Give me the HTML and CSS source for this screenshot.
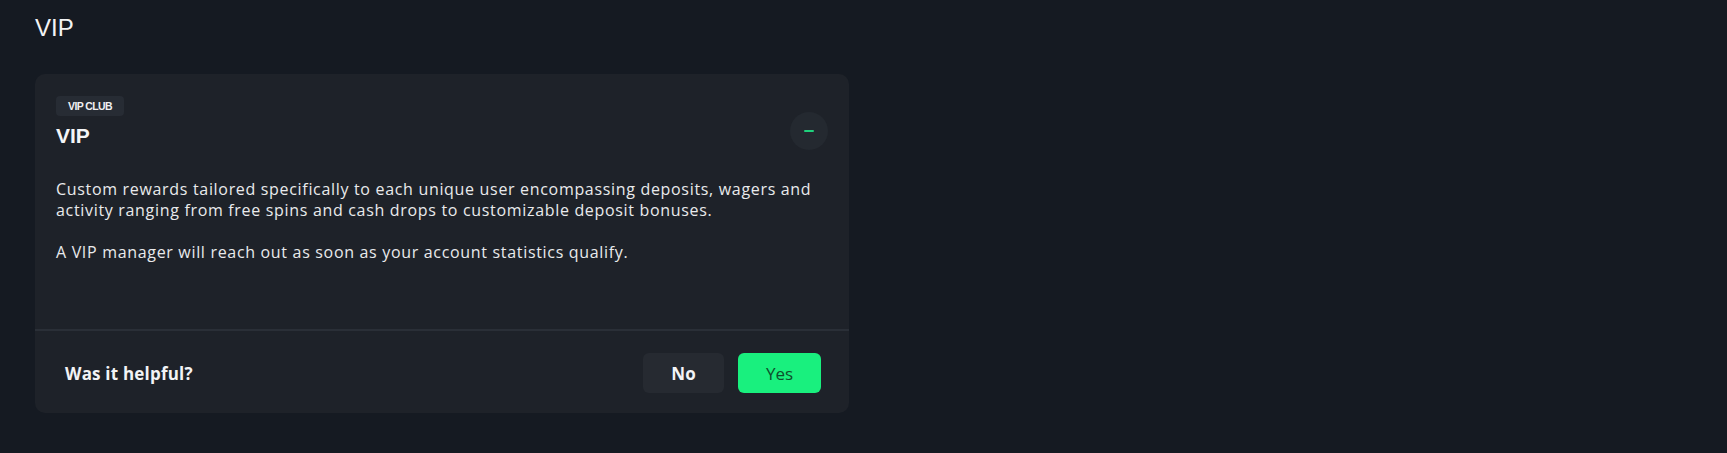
FILE: index.html
```html
<!DOCTYPE html>
<html lang="en">
<head>
<meta charset="utf-8">
<title>VIP</title>
<link rel="stylesheet" href="styles.css">
</head>
<body>
<main class="page">
  <h1 class="page-title">VIP</h1>
  <section class="card">
    <div class="card-body">
      <div class="card-head">
        <div class="head-text">
          <span class="badge">VIP CLUB</span>
          <h2 class="card-title">VIP</h2>
        </div>
        <button class="toggle" aria-label="Collapse">
          <svg width="12" height="4" viewBox="0 0 12 4"><rect x="1" y="1" width="10" height="2" rx="1" fill="#1fd17c"/></svg>
        </button>
      </div>
      <div class="card-text">
        <p>Custom rewards tailored specifically to each unique user encompassing deposits, wagers and activity ranging from free spins and cash drops to customizable deposit bonuses.</p>
        <p>A VIP manager will reach out as soon as your account statistics qualify.</p>
      </div>
    </div>
    <div class="card-foot">
      <span class="foot-label">Was it helpful?</span>
      <div class="foot-actions">
        <button class="btn btn-no">No</button>
        <button class="btn btn-yes">Yes</button>
      </div>
    </div>
  </section>
</main>
</body>
</html>
```

FILE: styles.css
```css
html, body {
  margin: 0;
  padding: 0;
  background: #151a22;
}
body {
  font-family: "Open Sans", "Liberation Sans", sans-serif;
  color: #ecedef;
}
.page {
  padding: 12px 35px;
}
.page-title {
  margin: 0;
  font-family: "Liberation Sans", Arial, sans-serif;
  font-size: 24px;
  line-height: 32px;
  font-weight: 400;
  color: #f2f3f5;
}
.card {
  margin-top: 30px;
  width: 814px;
  background: #1e2229;
  border-radius: 10px;
  overflow: hidden;
}
.card-body {
  padding: 22px 21px 66px 21px;
  border-bottom: 2px solid #2a2f37;
}
.card-head {
  display: flex;
  justify-content: space-between;
  align-items: flex-start;
}
.head-text {
  display: flex;
  flex-direction: column;
  align-items: flex-start;
}
.badge {
  display: inline-flex;
  align-items: center;
  justify-content: center;
  width: 68px;
  height: 20px;
  background: #272c34;
  border-radius: 4px;
  font-family: "Liberation Sans", Arial, sans-serif;
  font-weight: 700;
  font-size: 10.5px;
  letter-spacing: -0.6px;
  color: #f0f0f2;
}
.card-title {
  margin: 8px 0 0 0;
  font-family: "Liberation Sans", Arial, sans-serif;
  font-weight: 700;
  font-size: 21px;
  line-height: 24px;
  color: #f4f5f7;
}
.toggle {
  margin-top: 16px;
  width: 38px;
  height: 38px;
  border-radius: 50%;
  border: none;
  background: #242930;
  display: flex;
  align-items: center;
  justify-content: center;
  padding: 0;
}
.card-text {
  margin-top: 29px;
  font-size: 16px;
  line-height: 21px;
  letter-spacing: 0.68px;
  color: #e9eaec;
}
.card-text p {
  margin: 0 0 21px 0;
}
.card-text p:last-child {
  margin-bottom: 0;
}
.card-foot {
  display: flex;
  align-items: center;
  justify-content: space-between;
  padding: 22px 28px 20px 30px;
}
.foot-label {
  font-weight: 700;
  font-size: 17px;
  letter-spacing: 0.2px;
  color: #f2f3f5;
}
.foot-actions {
  display: flex;
  gap: 14px;
}
.btn {
  height: 40px;
  border: none;
  border-radius: 6px;
  font-family: "Open Sans", "Liberation Sans", sans-serif;
  font-size: 17px;
  padding: 0;
}
.btn-no {
  width: 81px;
  background: #262a31;
  color: #f4f5f7;
  font-weight: 700;
}
.btn-yes {
  width: 83px;
  background: #19f07e;
  color: #0e4f2b;
  font-weight: 500;
}
```
